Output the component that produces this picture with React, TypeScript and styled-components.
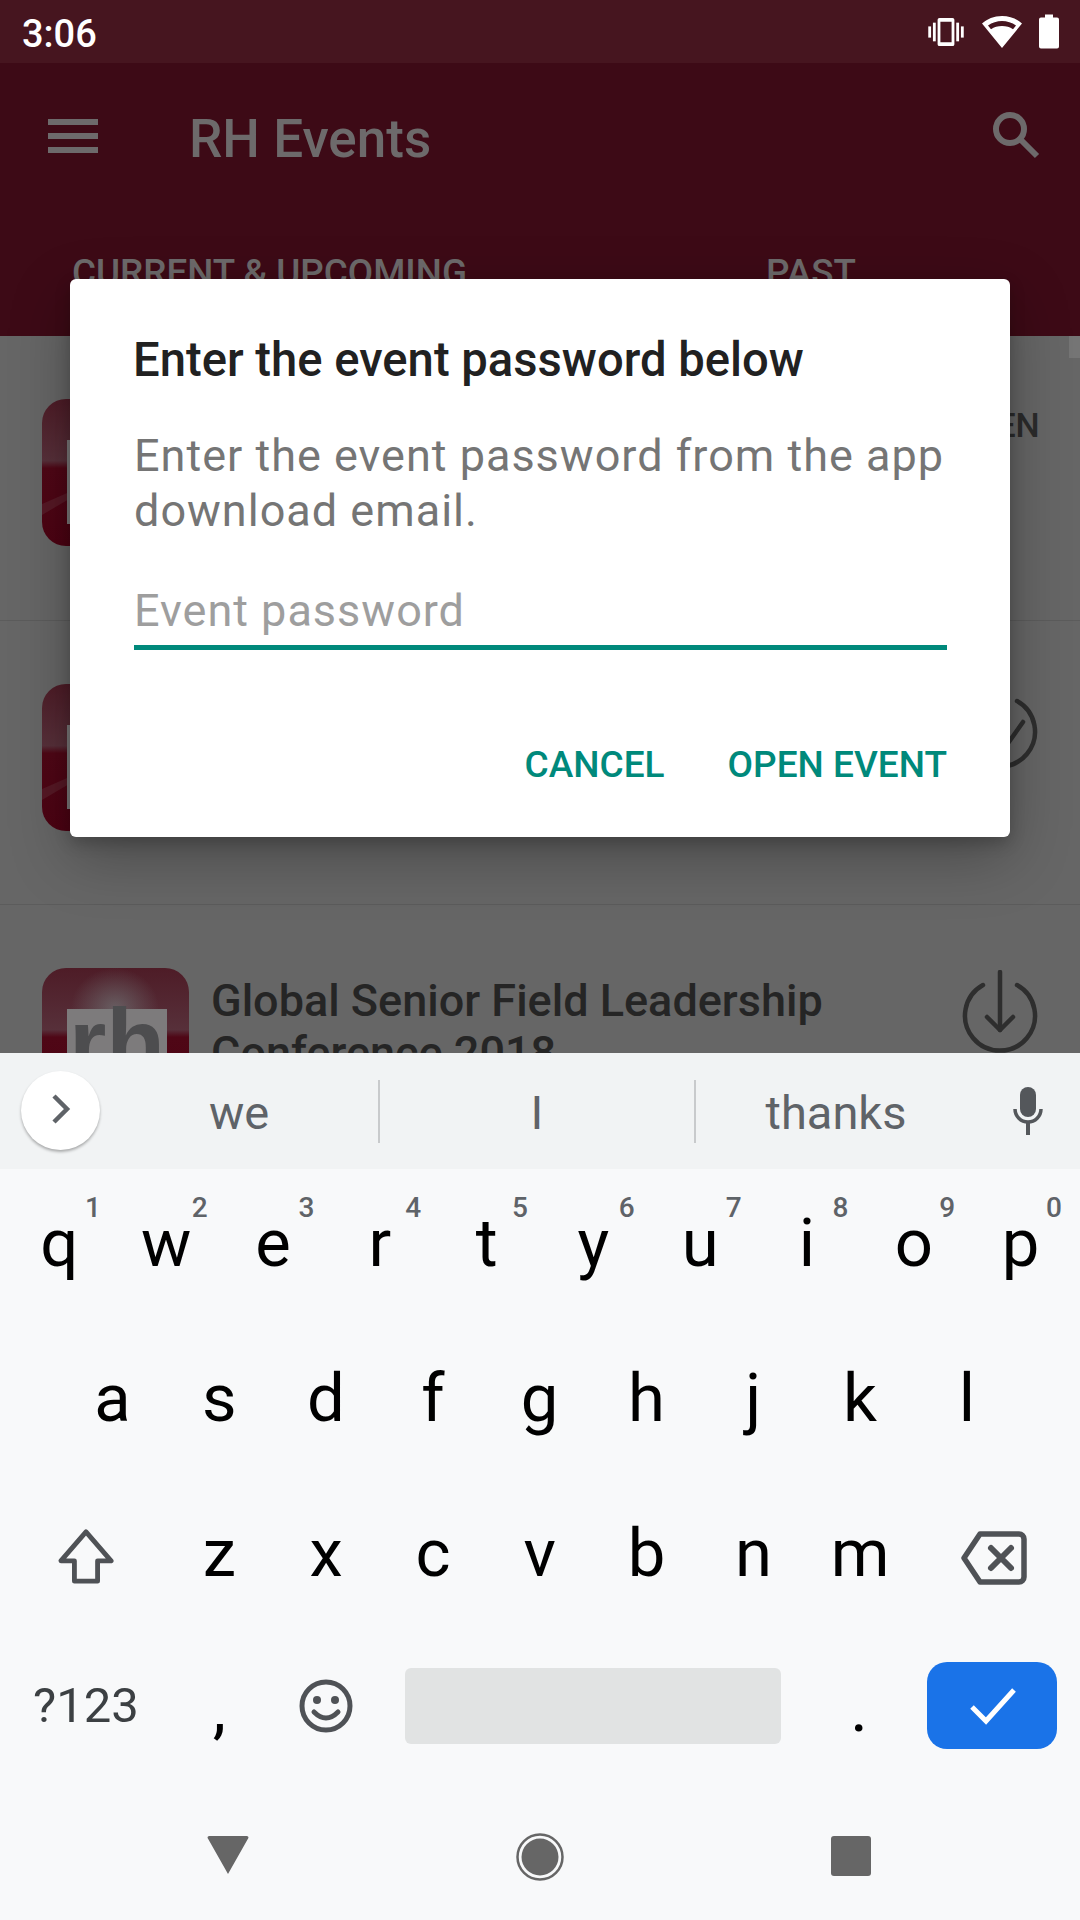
import React from "react";
import styled, { createGlobalStyle } from "styled-components";

const Global = createGlobalStyle`
  html, body { margin: 0; padding: 0; background: #f8f9fa; }
  * { box-sizing: border-box; }
  body { font-family: Roboto, "Liberation Sans", sans-serif; }
`;

const Screen = styled.div`
  position: relative;
  width: 1080px;
  height: 1920px;
  display: flex;
  flex-direction: column;
  overflow: hidden;
  background: #666;
`;

const StatusBar = styled.div`
  height: 63px;
  flex: none;
  background: #46151f;
  display: flex;
  align-items: center;
  justify-content: space-between;
  padding: 0 21px 0 22px;
  color: #fff;
  font-size: 38px;
  font-weight: 500;
`;

const StatusTime = styled.span`
  padding-top: 4px;
`;

const StatusIcons = styled.div`
  display: flex;
  align-items: center;
  gap: 17px;
`;

const AppBar = styled.header`
  height: 273px;
  flex: none;
  background: #3d0a16;
  color: #6d6a6b;
  display: flex;
  flex-direction: column;
`;

const ToolRow = styled.div`
  height: 120px;
  display: flex;
  align-items: center;
  padding: 0 40px 0 48px;
`;

const Title = styled.div`
  flex: 1;
  font-size: 53px;
  font-weight: 500;
  margin-left: 91px;
  margin-top: 32px;
`;

const Tabs = styled.div`
  display: flex;
  padding: 68px 0 0 72px;
  font-size: 36.8px;
  font-weight: 500;
`;

const Tab = styled.div<{ $w: number }>`
  width: ${(p) => p.$w}px;
`;

const List = styled.main`
  flex: 1;
  position: relative;
  overflow: hidden;
  background: #666;
`;

const ScrollThumb = styled.div`
  position: absolute;
  top: 0;
  right: 0;
  width: 11px;
  height: 22px;
  background: #757575;
`;

const Row = styled.div<{ $h: number }>`
  height: ${(p) => p.$h}px;
  border-bottom: 1px solid #5c5c5c;
  display: flex;
  align-items: flex-start;
  padding: 63px 42px 0 42px;
`;

const RowText = styled.div`
  flex: 1;
  margin: 7px 0 0 22px;
  font-size: 45px;
  font-weight: 500;
  line-height: 52px;
  color: #252525;
  white-space: nowrap;
  overflow: hidden;
`;

const RowMeta = styled.div`
  margin-top: 104px;
  line-height: 42px;
`;

const RowAction = styled.div`
  width: 76px;
  margin-top: 2px;
  display: flex;
  justify-content: center;
  font-size: 34px;
  font-weight: 500;
  color: #2b2b2b;
`;

const OpenLabel = styled.div`
  margin: 4px 9px 0 0;
  white-space: nowrap;
`;

const Dialog = styled.section`
  position: absolute;
  left: 70px;
  top: 279px;
  width: 940px;
  height: 558px;
  background: #fff;
  border-radius: 6px;
  box-shadow: 0 20px 60px rgba(0, 0, 0, 0.28), 0 6px 16px rgba(0, 0, 0, 0.2);
  padding: 54px 63px 0 64px;
  display: flex;
  flex-direction: column;
`;

const DialogTitle = styled.h2`
  margin: 0 0 0 -1px;
  font-size: 47.2px;
  line-height: 54px;
  font-weight: 500;
  color: #212121;
`;

const DialogBody = styled.p`
  margin: 41px 0 0;
  font-size: 45px;
  line-height: 55px;
  letter-spacing: 1px;
  color: #757575;
  white-space: nowrap;
`;

const Field = styled.div`
  margin-top: 41px;
  height: 71px;
  border-bottom: 5px solid #00897b;
  font-size: 45px;
  line-height: 64px;
  letter-spacing: 1px;
  color: #9e9e9e;
`;

const DialogActions = styled.div`
  margin-top: 93px;
  display: flex;
  justify-content: flex-end;
  gap: 63px;
`;

const DialogButton = styled.div`
  font-size: 37px;
  line-height: 44px;
  font-weight: 500;
  color: #00897b;
`;

const Keyboard = styled.div`
  flex: none;
  height: 867px;
  background: #f8f9fa;
  display: flex;
  flex-direction: column;
`;

const Strip = styled.div`
  height: 116px;
  background: #f1f3f4;
  display: flex;
  align-items: center;
  color: #5f6368;
`;

const Chevron = styled.div`
  margin: -2px 0 0 21px;
  width: 79px;
  height: 79px;
  flex: none;
  border-radius: 50%;
  background: #fff;
  box-shadow: 0 2px 3px rgba(0, 0, 0, 0.3);
  display: flex;
  align-items: center;
  justify-content: center;
  padding: 0 0 2px 0;
`;

const Suggestion = styled.div<{ $w: number; $divider?: boolean }>`
  width: ${(p) => p.$w}px;
  height: 63px;
  flex: none;
  display: flex;
  align-items: center;
  justify-content: center;
  font-size: 47px;
  padding-top: 3px;
  border-right: ${(p) => (p.$divider ? "2px solid #c8cacc" : "none")};
`;

const Mic = styled.div`
  margin-left: 17px;
  width: 70px;
  display: flex;
  justify-content: center;
`;

const KeyRow = styled.div<{ $pad?: number }>`
  height: 155px;
  flex: none;
  display: flex;
  padding: 0 ${(p) => p.$pad ?? 6}px;
`;

const Key = styled.div<{ $w?: number }>`
  position: relative;
  width: ${(p) => p.$w ?? 106.8}px;
  flex: none;
  display: flex;
  align-items: center;
  justify-content: center;
  font-size: 67px;
  color: #000;
  padding-bottom: 8px;
`;

const Hint = styled.span`
  position: absolute;
  top: 22px;
  right: 12px;
  font-size: 28px;
  font-weight: 500;
  color: #5f6368;
`;

const SymbolKey = styled(Key)`
  font-size: 46px;
  color: #3c4043;
  padding-bottom: 0;
`;

const BottomKey = styled(Key)`
  font-size: 49px;
  color: #3c4043;
  padding-bottom: 12px;
`;

const SpaceBar = styled.div`
  width: 376px;
  height: 76px;
  border-radius: 6px;
  background: #e1e3e3;
`;

const EnterKey = styled.div`
  width: 130px;
  height: 87px;
  border-radius: 20px;
  background: #1a73e8;
  display: flex;
  align-items: center;
  justify-content: center;
`;

const NavBar = styled.nav`
  flex: 1;
  display: flex;
  align-items: flex-start;
`;

const NavSlot = styled.div<{ $w: number }>`
  width: ${(p) => p.$w}px;
  flex: none;
  display: flex;
  justify-content: center;
  padding-top: 47px;
`;

const AppIcon = ({ id }: { id: string }) => (
  <svg width="147" height="147" viewBox="0 0 147 147" style={{ flex: "none" }}>
    <defs>
      <linearGradient id={id} x1="0" y1="0" x2="0" y2="1">
        <stop offset="0" stopColor="#4e1c27" />
        <stop offset="0.42" stopColor="#57303a" />
        <stop offset="0.47" stopColor="#4f0716" />
        <stop offset="1" stopColor="#4c0313" />
      </linearGradient>
      <radialGradient id={id + "g"} cx="0.5" cy="0.5" r="0.5">
        <stop offset="0" stopColor="#6e6e70" stopOpacity="0.75" />
        <stop offset="1" stopColor="#6e6e70" stopOpacity="0" />
      </radialGradient>
      <clipPath id={id + "c"}>
        <rect width="147" height="147" rx="24" />
      </clipPath>
    </defs>
    <g clipPath={`url(#${id}c)`}>
      <rect width="147" height="147" fill={`url(#${id})`} />
      <path d="M73 73 L0 105 L0 116 Z M73 73 L147 105 L147 116 Z" fill="#561825" />
      <ellipse cx="73" cy="40" rx="44" ry="40" fill={`url(#${id}g)`} />
      <rect x="25" y="41" width="100" height="84" fill="#7d7b7c" />
      <text x="75" y="108" textAnchor="middle" fontFamily="Liberation Sans, sans-serif" fontWeight="700" fontSize="96" fill="#4d4d4f">rh</text>
    </g>
  </svg>
);

const CircleAction = ({ down }: { down?: boolean }) => (
  <svg width="76" height="84" viewBox="0 0 76 84" fill="none" stroke="#2e2e2e" strokeWidth="4.5" strokeLinecap="round" strokeLinejoin="round">
    <path d="M21 15 A35 35 0 1 0 55 15" />
    {down ? (
      <>
        <path d="M38 2 V60" />
        <path d="M25 47 L38 60 L51 47" />
      </>
    ) : (
      <path d="M32 48 L44 60 L61 36" />
    )}
  </svg>
);

const row1 = [["q", "1"], ["w", "2"], ["e", "3"], ["r", "4"], ["t", "5"], ["y", "6"], ["u", "7"], ["i", "8"], ["o", "9"], ["p", "0"]];
const row2 = ["a", "s", "d", "f", "g", "h", "j", "k", "l"];
const row3 = ["z", "x", "c", "v", "b", "n", "m"];

export default function App() {
  return (
    <Screen>
      <Global />
      <StatusBar>
        <StatusTime>3:06</StatusTime>
        <StatusIcons>
          <svg width="38" height="28" viewBox="0 0 38 30" fill="#fff">
            <rect x="0" y="9" width="3" height="12" />
            <rect x="5" y="5" width="3" height="20" />
            <rect x="30" y="5" width="3" height="20" />
            <rect x="35" y="9" width="3" height="12" />
            <path fillRule="evenodd" d="M12 0h14a2 2 0 0 1 2 2v26a2 2 0 0 1-2 2H12a2 2 0 0 1-2-2V2a2 2 0 0 1 2-2zm1 4v22h12V4z" />
          </svg>
          <svg width="40" height="32" viewBox="0 0 40 32" fill="#fff">
            <path fillRule="evenodd" d="M20 0C12 0 5 3 0 7.500L20 32 40 7.500C35 3 28 0 20 0zM20 5c-5 0-10 1.700-14 4.500l3 3.700C12 11 16 10 20 10s8 1 11 3.200l3-3.700C30 6.700 25 5 20 5z" />
          </svg>
          <svg width="20" height="35" viewBox="0 0 20 34" fill="#fff">
            <path d="M6 0h8v3h4a2 2 0 0 1 2 2v27a2 2 0 0 1-2 2H2a2 2 0 0 1-2-2V5a2 2 0 0 1 2-2h4z" />
          </svg>
        </StatusIcons>
      </StatusBar>
      <AppBar>
        <ToolRow>
          <svg width="50" height="34" viewBox="0 0 50 34" fill="#6d6a6b" style={{ marginTop: 26 }}>
            <rect width="50" height="6" y="0" />
            <rect width="50" height="6" y="14" />
            <rect width="50" height="6" y="28" />
          </svg>
          <Title>RH Events</Title>
          <svg width="48" height="48" viewBox="0 0 48 48" fill="none" stroke="#6d6a6b" strokeWidth="6" style={{ marginTop: 24 }}>
            <circle cx="18" cy="18" r="14" />
            <path d="M28 28 L45 45" />
          </svg>
        </ToolRow>
        <Tabs>
          <Tab $w={694}>CURRENT &amp; UPCOMING</Tab>
          <Tab $w={120}>PAST</Tab>
        </Tabs>
      </AppBar>
      <List>
        <ScrollThumb />
        <Row $h={285}>
          <AppIcon id="a" />
          <RowText />
          <RowAction>
            <OpenLabel>OPEN</OpenLabel>
          </RowAction>
        </Row>
        <Row $h={284}>
          <AppIcon id="b" />
          <RowText>
            <RowMeta>Design</RowMeta>
          </RowText>
          <RowAction>
            <CircleAction />
          </RowAction>
        </Row>
        <Row $h={284}>
          <AppIcon id="c" />
          <RowText>
            Global Senior Field Leadership
            <br />
            Conference 2018
          </RowText>
          <RowAction>
            <CircleAction down />
          </RowAction>
        </Row>
      </List>
      <Keyboard>
        <Strip>
          <Chevron>
            <svg width="20" height="32" viewBox="0 0 20 32" fill="none" stroke="#5f6368" strokeWidth="4.500">
              <path d="M3 3 L16 16 L3 29" />
            </svg>
          </Chevron>
          <Suggestion $w={280} $divider>we</Suggestion>
          <Suggestion $w={316} $divider>I</Suggestion>
          <Suggestion $w={280}>thanks</Suggestion>
          <Mic>
            <svg width="34" height="48" viewBox="0 0 32 48" fill="#54575b">
              <rect x="8" y="0" width="16" height="30" rx="8" />
              <path d="M3 22 a13 13 0 0 0 26 0" fill="none" stroke="#54575b" strokeWidth="3.500" />
              <rect x="14" y="35" width="4" height="13" />
            </svg>
          </Mic>
        </Strip>
        <KeyRow>
          {row1.map(([k, n]) => (
            <Key key={k}>
              {k}
              <Hint>{n}</Hint>
            </Key>
          ))}
        </KeyRow>
        <KeyRow $pad={59}>
          {row2.map((k) => (
            <Key key={k}>{k}</Key>
          ))}
        </KeyRow>
        <KeyRow>
          <SymbolKey $w={160}>
            <svg width="60" height="56" viewBox="0 0 60 58" fill="none" stroke="#4f5256" strokeWidth="5" strokeLinejoin="round">
              <path d="M30 3 L56 33 H42 V54 H18 V33 H4 Z" />
            </svg>
          </SymbolKey>
          {row3.map((k) => (
            <Key key={k}>{k}</Key>
          ))}
          <SymbolKey $w={160}>
            <svg width="66" height="54" viewBox="0 0 66 54" fill="none" stroke="#4f5256" strokeWidth="5.500" strokeLinejoin="round" style={{ marginTop: 2 }}>
              <path d="M19 3 H58 a5 5 0 0 1 5 5 V46 a5 5 0 0 1 -5 5 H19 L3 27 Z" />
              <path d="M30 17 L50 37 M50 17 L30 37" strokeWidth="6" strokeLinecap="round" />
            </svg>
          </SymbolKey>
        </KeyRow>
        <KeyRow>
          <BottomKey $w={160}>?123</BottomKey>
          <Key>,</Key>
          <BottomKey>
            <svg width="54" height="54" viewBox="0 0 54 54" fill="none" stroke="#4f5256" strokeWidth="5">
              <circle cx="27" cy="27" r="24" />
              <circle cx="18" cy="21" r="4" fill="#4f5256" stroke="none" />
              <circle cx="36" cy="21" r="4" fill="#4f5256" stroke="none" />
              <path d="M15 33 Q27 45 39 33" strokeLinecap="round" />
            </svg>
          </BottomKey>
          <BottomKey $w={426}>
            <SpaceBar />
          </BottomKey>
          <Key>.</Key>
          <BottomKey $w={160}>
            <EnterKey>
              <svg width="48" height="40" viewBox="0 0 48 40" fill="none" stroke="#fff" strokeWidth="5" style={{ marginLeft: 2 }}>
                <path d="M3 21 L17 35 L45 4" />
              </svg>
            </EnterKey>
          </BottomKey>
        </KeyRow>
        <NavBar>
          <NavSlot $w={456}>
            <svg width="44" height="38" viewBox="0 0 44 40" fill="#666">
              <path d="M2 0 H42 a2 2 0 0 1 1 3 L22 40 L1 3 a2 2 0 0 1 1-3z" />
            </svg>
          </NavSlot>
          <NavSlot $w={168}>
            <svg width="48" height="48" viewBox="0 0 48 48" style={{ marginTop: -3 }}>
              <circle cx="24" cy="24" r="22.500" fill="none" stroke="#666" strokeWidth="2.500" />
              <circle cx="24" cy="24" r="18.500" fill="#666" />
            </svg>
          </NavSlot>
          <NavSlot $w={454}>
            <svg width="40" height="40" viewBox="0 0 40 40" fill="#666">
              <rect width="40" height="40" rx="3" />
            </svg>
          </NavSlot>
        </NavBar>
      </Keyboard>
      <Dialog>
        <DialogTitle>Enter the event password below</DialogTitle>
        <DialogBody>
          Enter the event password from the app
          <br />
          download email.
        </DialogBody>
        <Field>Event password</Field>
        <DialogActions>
          <DialogButton>CANCEL</DialogButton>
          <DialogButton>OPEN EVENT</DialogButton>
        </DialogActions>
      </Dialog>
    </Screen>
  );
}
